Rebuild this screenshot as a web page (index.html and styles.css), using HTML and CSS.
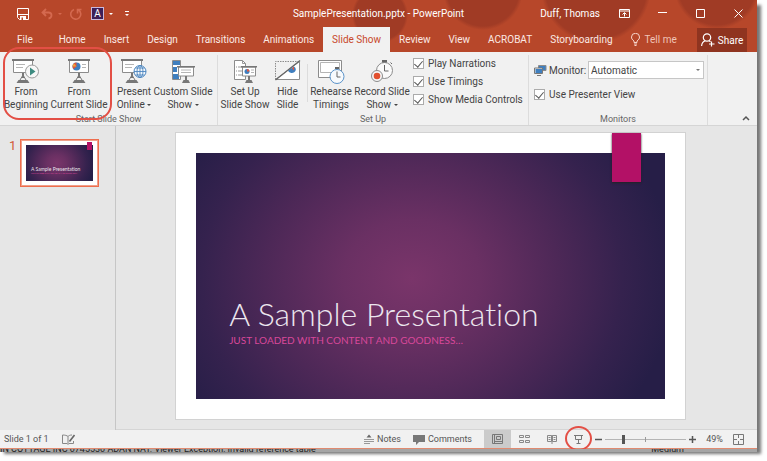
FILE: index.html
```html
<!DOCTYPE html>
<html lang="en">
<head>
  <meta charset="UTF-8" />
  <meta name="viewport" content="width=device-width, initial-scale=1.0"/>
  <title>SamplePresentation.pptx - PowerPoint</title>
  <link rel="stylesheet" href="styles.css">
</head>
<body>

  <div class="window">

    <!-- Title bar -->
    <header class="top">
      <div class="titlebar">
        <div class="quick">
          <button class="q-save" aria-label="Save">
            <svg width="12" height="12" viewBox="0 0 12 12"><path d="M0.5 0.5h11v11h-9l-2-2z" fill="none" stroke="#fff"/><path d="M0.5 6h11v1h-11z" fill="#fff"/><path d="M3 8h6v4H3z" fill="#fff"/><path d="M4.500 9.500h1.500V12H4.500z" fill="#b7472a"/></svg>
          </button>
          <button class="q-undo" aria-label="Undo">
            <svg width="22" height="12" viewBox="0 0 22 12"><path d="M5 1L1.500 4.500 5 8M2 4.500h5.500c4 0 4 5.500 0 6" fill="none" stroke="#d4694f" stroke-width="1.800"/><path d="M17 5h4l-2 2z" fill="#d4694f"/></svg>
          </button>
          <button class="q-redo" aria-label="Repeat">
            <svg width="12" height="12" viewBox="0 0 12 12"><path d="M4 1.500A5 5 0 1 0 8.500 2M7.500 5.500V1.500h4" fill="none" stroke="#d4694f" stroke-width="1.600"/></svg>
          </button>
          <button class="q-font" aria-label="Font"><span class="font-box">A</span><i class="caret"></i></button>
          <button class="q-more" aria-label="Customize Quick Access Toolbar"><i class="dash"></i><i class="caret"></i></button>
        </div>
        <div class="doc-title">SamplePresentation.pptx - PowerPoint</div>
        <div class="win-side">
          <span class="user">Duff, Thomas</span>
          <button class="win-btn" aria-label="Ribbon Display Options">
            <svg width="11" height="9" viewBox="0 0 11 9"><path d="M0.500 0.500h10v8h-10zM0.500 2h10M5.500 7.500V4M3.500 5.500l2-2 2 2" fill="none" stroke="#fff"/></svg>
          </button>
          <button class="win-btn" aria-label="Minimize">
            <svg width="9" height="9" viewBox="0 0 9 9"><path d="M0 3.500h9" stroke="#fff"/></svg>
          </button>
          <button class="win-btn" aria-label="Maximize">
            <svg width="9" height="9" viewBox="0 0 9 9"><path d="M0.500 0.500h8v8h-8z" fill="none" stroke="#fff"/></svg>
          </button>
          <button class="win-btn" aria-label="Close">
            <svg width="9" height="9" viewBox="0 0 9 9"><path d="M0.500 0.500l8 8M8.500 0.500l-8 8" stroke="#fff"/></svg>
          </button>
        </div>
      </div>

      <!-- Tabs -->
      <nav class="tabs">
        <a class="tab file" href="#">File</a>
        <a class="tab" href="#">Home</a>
        <a class="tab" href="#">Insert</a>
        <a class="tab" href="#">Design</a>
        <a class="tab" href="#">Transitions</a>
        <a class="tab" href="#">Animations</a>
        <a class="tab active" href="#">Slide Show</a>
        <a class="tab" href="#">Review</a>
        <a class="tab" href="#">View</a>
        <a class="tab" href="#">ACROBAT</a>
        <a class="tab" href="#">Storyboarding</a>
        <a class="tab tell" href="#">
          <svg width="9" height="13" viewBox="0 0 9 13"><path d="M3 9.500V8C1 6.500 0.500 5.500 0.500 4a4 3.700 0 0 1 8 0c0 1.500-.5 2.500-2.500 4v1.500zM3 11h3M3.500 12.500h2" fill="none" stroke="#f6d5cb"/></svg>
          Tell me
        </a>
        <button class="share">
          <svg width="14" height="14" viewBox="0 0 14 14"><circle cx="6" cy="4.500" r="3.700" fill="none" stroke="#fff" stroke-width="1.200"/><path d="M0.600 13c.2-3 1.600-4.500 3.700-5.200M8 7.800l1.500 1M10.500 8.500v5M8 11h5.500" fill="none" stroke="#fff" stroke-width="1.200"/></svg>
          Share
        </button>
      </nav>
    </header>

    <!-- Ribbon -->
    <section class="ribbon">
      <div class="group start">
        <div class="tools">
          <button class="tool w-begin">
            <svg width="28" height="24" viewBox="0 0 28 24"><use href="#board"/><circle cx="20" cy="12.500" r="6.500" fill="#f7f7f7" stroke="#9a9a9a"/><path d="M18 8.500l5.500 4-5.500 4z" fill="#3d8b80"/></svg>
            <span>From</span><span>Beginning</span>
          </button>
          <button class="tool w-current">
            <svg width="22" height="24" viewBox="0 0 22 24"><use href="#board"/><path d="M3 4h11v8H3z" fill="#fff"/><use href="#pie" x="4" y="3"/><path d="M14 5.500h4M14 8.500h4" stroke="#b5b5b5"/></svg>
            <span>From</span><span>Current Slide</span>
          </button>
          <button class="tool w-present">
            <svg width="26" height="24" viewBox="0 0 26 24"><use href="#board"/><circle cx="19" cy="12.500" r="6" fill="#f1f6fb" stroke="#4c86bf"/><path d="M13 12.500h12M14.500 9h9M14.500 16h9M19 6.500v12" stroke="#4c86bf" stroke-width=".9"/><ellipse cx="19" cy="12.500" rx="3" ry="6" fill="none" stroke="#4c86bf" stroke-width=".9"/></svg>
            <span>Present</span><span>Online <i class="caret"></i></span>
          </button>
          <button class="tool w-custom">
            <svg width="24" height="24" viewBox="0 0 24 24"><path d="M1.500 1.500h8v19h-8z" fill="#fff" stroke="#8c8c8c"/><path d="M2 2h7v4H2zM2 8h4v5H2zM2 15h6v5H2z" fill="#3f7fbf"/><path d="M7.500 8h15v9h-15z" fill="#fff" stroke="#8c8c8c"/><path d="M6 7h18v1.500H6zM14 17h2v4h-2zM11 24l1.500-3h5l1.500 3z" fill="#777"/><path d="M10 11h10M10 13.500h10" stroke="#b5b5b5"/></svg>
            <span>Custom Slide</span><span>Show <i class="caret"></i></span>
          </button>
        </div>
        <h2>Start Slide Show</h2>
      </div>

      <div class="group setup">
        <div class="tools">
          <button class="tool w-setup">
            <svg width="24" height="24" viewBox="0 0 24 24"><path d="M1.500 1.500h8l3 3v16h-11z" fill="#fff" stroke="#8c8c8c"/><path d="M9.500 1.500v3h3M3 8h1M5 8h4M3 12h1M5 12h4M3 16h1M5 16h4" fill="none" stroke="#999"/><path d="M9.500 8h13v9h-13z" fill="#fff" stroke="#8c8c8c"/><path d="M8 7h16v1.500H8zM15 17h2v4h-2zM12 24l1.500-3h5l1.500 3z" fill="#777"/><circle cx="14" cy="12.500" r="2.500" fill="#3f7fbf"/><path d="M14 12.500V10a2.500 2.500 0 0 1 2.500 2.500z" fill="#e2553d"/><path d="M18 11h3M18 13.500h3" stroke="#b5b5b5"/></svg>
            <span>Set Up</span><span>Slide Show</span>
          </button>
          <button class="tool w-hide">
            <svg width="26" height="24" viewBox="0 0 26 24"><path d="M0.500 20.500v-18h24" fill="none" stroke="#8c8c8c" stroke-dasharray="1.500 1"/><path d="M24.500 2.500v18H0.500z" fill="#fff" stroke="#8c8c8c"/><path d="M13 11.500a4 3.500 0 1 0 6-4z" fill="#3f7fbf"/><path d="M17 9.500l2-2v4z" fill="#e2553d"/><path d="M0.500 21L25 1.500" stroke="#666" stroke-width="1.200"/></svg>
            <span>Hide</span><span>Slide</span>
          </button>
          <div class="split"></div>
          <button class="tool w-rehearse">
            <svg width="28" height="26" viewBox="0 0 28 26"><path d="M1.500 2.500h23v17h-23z" fill="#fff" stroke="#8c8c8c"/><path d="M3.500 4.500h19v10h-19z" fill="none" stroke="#b5b5b5"/><circle cx="20" cy="18.500" r="7" fill="#f7fafd" stroke="#5b93c9"/><path d="M18 9h4v2h-4z" fill="#666"/><path d="M20 13.500v5.500h3.500" fill="none" stroke="#666"/></svg>
            <span>Rehearse</span><span>Timings</span>
          </button>
          <button class="tool w-record">
            <svg width="24" height="26" viewBox="0 0 24 26"><circle cx="14.500" cy="12.500" r="8" fill="#fafafa" stroke="#8c8c8c"/><path d="M12 2h5v2.500h-5z" fill="#666"/><path d="M14.500 7v6h4M20.500 4.500l1.500 1.500" fill="none" stroke="#666"/><circle cx="7" cy="18" r="5.500" fill="#f7f7f7" stroke="#8c8c8c"/><circle cx="7" cy="18" r="3.300" fill="#e2502f"/></svg>
            <span>Record Slide</span><span>Show <i class="caret"></i></span>
          </button>
          <div class="checks">
            <label><input type="checkbox" checked> Play Narrations</label>
            <label><input type="checkbox" checked> Use Timings</label>
            <label><input type="checkbox" checked> Show Media Controls</label>
          </div>
        </div>
        <h2>Set Up</h2>
      </div>

      <div class="group monitors">
        <div class="tools">
          <div class="field">
            <svg width="13" height="12" viewBox="0 0 13 12"><path d="M4.500 1.500h7.500v5h-7.500z" fill="#3f7fbf" stroke="#8c8c8c"/><path d="M1 4.500h7.500v5H1z" fill="#3f7fbf" stroke="#eee"/><path d="M0.500 4h8v5.500h-8zM3 11.500h4" fill="none" stroke="#777"/></svg>
            <label for="monitor">Monitor:</label>
            <span class="select-wrap">
              <select id="monitor">
                <option>Automatic</option>
                <option>Primary Monitor</option>
              </select>
            </span>
          </div>
          <label class="presenter"><input type="checkbox" checked> Use Presenter View</label>
        </div>
        <h2>Monitors</h2>
      </div>

      <button class="collapse" aria-label="Collapse the Ribbon">
        <svg width="8" height="6" viewBox="0 0 8 6"><path d="M1 5l3-3 3 3" fill="none" stroke="#555" stroke-width="1.500"/></svg>
      </button>

      <div class="mark mark-start"></div>
    </section>

    <!-- Slides -->
    <main class="work">
      <aside class="thumbs">
        <span class="num">1</span>
        <div class="slide thumb">
          <div class="art">
            <p class="title">A Sample Presentation</p>
            <p class="sub">JUST LOADED WITH CONTENT AND GOODNESS…</p>
          </div>
          <div class="ribbon-tag"></div>
        </div>
      </aside>
      <div class="stage">
        <div class="slide">
          <div class="art">
            <h1 class="title">A Sample Presentation</h1>
            <p class="sub">JUST LOADED WITH CONTENT AND GOODNESS…</p>
          </div>
          <div class="ribbon-tag"></div>
        </div>
      </div>
    </main>

    <!-- Status bar -->
    <footer class="status">
      <span class="count">Slide 1 of 1</span>
      <button aria-label="Spelling">
        <svg width="13" height="11" viewBox="0 0 13 11"><path d="M6 2.500C5 1.500 3 1 0.500 1v8.500H5l1 1 1-1h4.500V7M6 2.500v7.500M6 2.500C7 1.500 8 1 10 1" fill="none" stroke="#888"/><path d="M12.500 1L7.500 7.500" stroke="#666" stroke-width="1.600"/></svg>
      </button>
      <span class="space"></span>
      <button class="notes">
        <svg width="10" height="10" viewBox="0 0 10 10"><path d="M5 0.500L7.500 3.500h-5z" fill="#666"/><path d="M0 5.500h10M0 7.500h10M0 9.500h6" stroke="#999"/></svg>
        Notes
      </button>
      <button class="comments">
        <svg width="12" height="11" viewBox="0 0 12 11"><path d="M0 1h12v7H6l-3 3V8H0z" fill="#777"/></svg>
        Comments
      </button>
      <button class="view on" aria-label="Normal">
        <svg width="11" height="10" viewBox="0 0 11 10"><path d="M0.500 0.500h10v9h-10zM2.500 0.500v9M4.500 2.500h4v3h-4zM2.500 7.500h8" fill="none" stroke="#777"/></svg>
      </button>
      <button class="view" aria-label="Slide Sorter">
        <svg width="11" height="10" viewBox="0 0 11 10"><path d="M0.500 1.500h4v2h-4zM6.500 1.500h4v2h-4zM0.500 6.500h4v2h-4zM6.500 6.500h4v2h-4z" fill="none" stroke="#888"/></svg>
      </button>
      <button class="view" aria-label="Reading View">
        <svg width="10" height="10" viewBox="0 0 10 10"><path d="M0.500 1.500h4v6h-4zM5.500 1.500h4v6h-4zM1.500 3.500h2M1.500 5.500h2M6.500 3.500h2M6.500 5.500h2M5 1v9" fill="none" stroke="#888"/></svg>
      </button>
      <button class="view show" aria-label="Slide Show">
        <svg width="9" height="10" viewBox="0 0 9 10"><path d="M0 1.500h9M1.500 2v3.500h6V2M4.500 5.500V9M2.500 9.500h4" fill="none" stroke="#777"/></svg>
        <span class="mark mark-show"></span>
      </button>
      <button class="zoom-btn" aria-label="Zoom Out">
        <svg width="7" height="7" viewBox="0 0 7 7"><path d="M0 3.500h7" stroke="#555" stroke-width="1.500"/></svg>
      </button>
      <input class="zoom" type="range" min="0" max="100" value="22" aria-label="Zoom">
      <button class="zoom-btn" aria-label="Zoom In">
        <svg width="7" height="7" viewBox="0 0 7 7"><path d="M0 3.500h7M3.500 0v7" stroke="#555" stroke-width="1.500"/></svg>
      </button>
      <span class="percent">49%</span>
      <button class="fit" aria-label="Fit slide to current window">
        <svg width="11" height="11" viewBox="0 0 11 11"><path d="M0.500 0.500h10v10h-10z" fill="none" stroke="#777"/><path d="M5.500 0v4M5.500 7v4M0 5.500h4M7 5.500h4" stroke="#777"/></svg>
      </button>
    </footer>
  </div>

  <!-- Edge of the window behind -->
  <div class="behind">
    <span>IN COTTAGE INC 0745530 ADAN NAT. Viewer Exception: Invalid reference table</span>
    <span class="level">Medium</span>
  </div>

  <svg width="0" height="0" class="defs">
    <symbol id="board" viewBox="0 0 22 24" width="22" height="24">
      <path d="M1.500 1.500h19v12h-19z" fill="#fff" stroke="#8c8c8c"/>
      <path d="M0 0h22v2H0zM10 14h2v5h-2zM4.500 24l2-3h9l2 3z" fill="#777"/>
      <path d="M11 16l-3 5M11 16l3 5" stroke="#777"/>
      <path d="M4 5.500h9M4 8.500h7" stroke="#b5b5b5"/>
    </symbol>
    <symbol id="pie" viewBox="0 0 9 9" width="9" height="9">
      <circle cx="4.500" cy="4.500" r="4" fill="#3f7fbf"/>
      <path d="M4.500 4.500v-4a4 4 0 0 0-3 6.500z" fill="#e2553d"/>
      <path d="M4.500 4.500h-4a4 4 0 0 1 1.500-3z" fill="#f0a33c"/>
    </symbol>
  </svg>

</body>
</html>
```
FILE: styles.css
```css
* {
  box-sizing: border-box;
}

body {
  margin: 0;
  padding-right: 10px;
  min-height: 100vh;
  display: flex;
  flex-direction: column;
  background: #fff;
  font-family: Roboto, sans-serif;
  font-size: 10px;
  line-height: 13px;
  color: #444;
}

button, input, select {
  font: inherit;
  color: inherit;
  margin: 0;
}

button {
  display: flex;
  align-items: center;
  justify-content: center;
  border: none;
  background: none;
  padding: 0;
  cursor: pointer;
}

h1, h2, p {
  margin: 0;
  font-weight: normal;
}

svg {
  display: block;
  flex: none;
}

.defs {
  position: absolute;
}

.window {
  flex: 1;
  display: flex;
  flex-direction: column;
  border-bottom: 1px solid #e08a70;
  box-shadow: 4px 5px 3px #777;
}

.caret {
  display: inline-block;
  border: 2px solid transparent;
  border-top-color: currentColor;
  border-bottom: none;
  vertical-align: middle;
}

/* title bar */
.top {
  color: #fff;
  background:
    radial-gradient(circle 28px at 380px 15px, #a03b25 90%, transparent),
    radial-gradient(circle 40px at 483px -10px, #a03b25 90%, transparent),
    radial-gradient(circle 55px at 596px -12px, #a03b25 92%, transparent),
    radial-gradient(circle 43px at 717px -14px, #a03b25 90%, transparent),
    #b7472a;
}

.titlebar {
  height: 27px;
  display: grid;
  grid-template-columns: 1fr auto 1fr;
  align-items: center;
}

.quick {
  display: flex;
  align-items: center;
  padding-left: 17px;
}

.q-undo {
  margin-left: 12px;
}

.q-redo {
  margin-left: 7px;
}

.q-font {
  margin-left: 9px;
  gap: 5px;
}

.font-box {
  width: 13px;
  height: 13px;
  line-height: 11px;
  border: 1px solid #c9b8dc;
  background: #3d1f57;
}

.q-more {
  flex-direction: column;
  gap: 2px;
  margin-left: 12px;
}

.dash {
  width: 4px;
  height: 1px;
  background: #fff;
}

.win-side {
  display: flex;
  align-items: center;
  justify-content: flex-end;
}

.user {
  margin-right: 5px;
}

.win-btn {
  width: 38px;
  height: 24px;
}

/* tabs */
.tabs {
  display: flex;
  height: 25px;
}

.tab {
  display: flex;
  align-items: center;
  padding: 0 9px;
  color: #fbe9e4;
  text-decoration: none;
  white-space: nowrap;
}

.file {
  padding: 0 17px;
}

.active {
  background: #f1f1f1;
  color: #c8492b;
}

.tell {
  gap: 5px;
  color: #f0c4b7;
}

.share {
  flex: none;
  width: 50px;
  height: 24px;
  margin: 1px 10px 0 auto;
  gap: 3px;
  background: #8f3420;
}

/* ribbon */
.ribbon {
  position: relative;
  display: flex;
  background: #f1f1f1;
  border-bottom: 1px solid #d5d5d5;
  padding-top: 3px;
}

.group {
  display: flex;
  flex-direction: column;
  border-right: 1px solid #dcdcdc;
}

.group h2 {
  text-align: center;
  font-size: 9px;
  line-height: 11px;
  color: #666;
}

.tools {
  display: flex;
  height: 59px;
}

.tool {
  flex-direction: column;
  justify-content: flex-start;
  padding-top: 2px;
  white-space: nowrap;
}

.tool svg {
  height: 28px;
}

.start {
  width: 218px;
}

.setup {
  width: 311px;
}

.monitors {
  width: 179px;
}

.w-begin {
  width: 52px;
}

.w-current {
  width: 54px;
}

.w-present {
  width: 46px;
  padding-left: 10px;
}

.w-custom {
  width: 62px;
}

.w-setup {
  width: 54px;
}

.w-hide {
  width: 31px;
}

.split {
  width: 1px;
  margin: 9px 0 12px 4px;
  background: #dcdcdc;
}

.w-rehearse {
  width: 46px;
}

.w-record {
  width: 56px;
}

.checks {
  display: flex;
  flex-direction: column;
  gap: 5px;
  padding-left: 3px;
  padding-top: 2px;
}

.checks label, .presenter {
  display: flex;
  align-items: center;
  gap: 4px;
  white-space: nowrap;
}

input[type="checkbox"] {
  appearance: none;
  display: grid;
  place-items: center;
  width: 11px;
  height: 11px;
  border: 1px solid #ababab;
  background: #fff;
}

input[type="checkbox"]:checked::after {
  content: "";
  width: 4px;
  height: 7px;
  margin-bottom: 2px;
  border: solid #555;
  border-width: 0 1px 1px 0;
  transform: rotate(40deg);
}

.monitors .tools {
  flex-direction: column;
  gap: 9px;
  padding: 6px 3px 0 5px;
}

.field {
  display: flex;
  align-items: center;
  gap: 2px;
}

.select-wrap {
  position: relative;
  flex: 1;
}

.select-wrap::after {
  content: "";
  position: absolute;
  right: 4px;
  top: 8px;
  border: 2px solid transparent;
  border-top-color: #777;
  border-bottom: none;
}

select {
  display: block;
  appearance: none;
  width: 100%;
  height: 18px;
  padding: 0 2px;
  border: 1px solid #c6c6c6;
  border-radius: 0;
  background: #fff;
}

.collapse {
  align-self: flex-end;
  margin: 0 7px 4px auto;
}

/* red call-outs */
.mark {
  position: absolute;
  border: 2px solid #e34f45;
  pointer-events: none;
}

.mark-start {
  left: 3px;
  top: -5px;
  width: 109px;
  height: 73px;
  border-radius: 16px;
}

.mark-show {
  left: 0;
  top: -4px;
  width: 27px;
  height: 25px;
  border-radius: 50%;
}

/* slides */
.work {
  flex: 1;
  display: grid;
  grid-template-columns: 116px 1fr;
  background: #e6e6e6;
}

.thumbs {
  display: flex;
  align-items: flex-start;
  gap: 4px;
  padding: 13px 0 0 9px;
  border-right: 1px solid #c6c6c6;
}

.num {
  font-size: 13px;
  color: #d2593a;
}

.stage {
  padding: 7px 72px 10px 60px;
  border-bottom: 1px solid #d5d5d5;
}

.slide {
  position: relative;
  aspect-ratio: 16 / 9;
  padding: 4%;
  background: #fff;
  box-shadow: 0 0 0 1px #d2d2d2;
}

.art {
  height: 100%;
  display: flex;
  flex-direction: column;
  justify-content: flex-end;
  padding: 0 0 11% 7%;
  background: radial-gradient(ellipse 56% 92% at 46% 51%, #7a356a, #6a3063 26%, #4d2857 56%, #35224e 80%, #261e47);
  font-family: Lato, sans-serif;
  font-variant-ligatures: none;
  white-space: nowrap;
}

.title {
  font-size: 32px;
  line-height: 40px;
  font-weight: 300;
  color: #ece6ee;
}

.sub {
  font-size: 10px;
  line-height: 13px;
  color: #d9489a;
}

.ribbon-tag {
  position: absolute;
  top: 0;
  right: 8.6%;
  width: 5.8%;
  height: 17%;
  background: #b31166;
  box-shadow: 0 1px 2px #222;
}

.thumb {
  width: 79px;
  height: 48px;
  padding: 5px;
  border: 1px solid #ee6d4d;
  outline: 1px solid #f0a08a;
  outline-offset: -2px;
  box-shadow: none;
}

.thumb .title {
  font-size: 5px;
  line-height: 5px;
  font-weight: 400;
}

.thumb .sub {
  font-size: 2px;
  line-height: 2px;
}

.thumb .ribbon-tag {
  top: 2px;
  box-shadow: none;
}

/* status bar */
.status {
  height: 18px;
  display: flex;
  align-items: center;
  background: #f1f1f1;
  font-size: 9px;
  color: #555;
}

.count {
  margin: 0 13px 0 4px;
}

.space {
  flex: 1;
}

.notes, .comments {
  gap: 3px;
  margin-right: 12px;
}

.view {
  position: relative;
  width: 27px;
  height: 18px;
}

.on {
  background: #cbcbcb;
}

.zoom-btn {
  width: 13px;
}

.zoom {
  appearance: none;
  width: 81px;
  height: 11px;
  background:
    linear-gradient(#999, #999) center / 1px 5px no-repeat,
    linear-gradient(#b5b5b5, #b5b5b5) center / 100% 1px no-repeat;
}

.zoom::-webkit-slider-thumb {
  appearance: none;
  width: 3px;
  height: 9px;
  background: #555;
}

.percent {
  width: 31px;
  text-align: center;
}

.fit {
  margin: 0 13px 0 3px;
}

/* sliver of another window */
.behind {
  position: relative;
  display: flex;
  align-items: flex-end;
  height: 3px;
  margin-bottom: 9px;
  overflow: hidden;
  background: #a5a5a5;
  font-size: 9px;
  line-height: 6px;
  color: #222;
  white-space: nowrap;
}

.behind .level {
  margin: 0 73px 0 auto;
}
```
